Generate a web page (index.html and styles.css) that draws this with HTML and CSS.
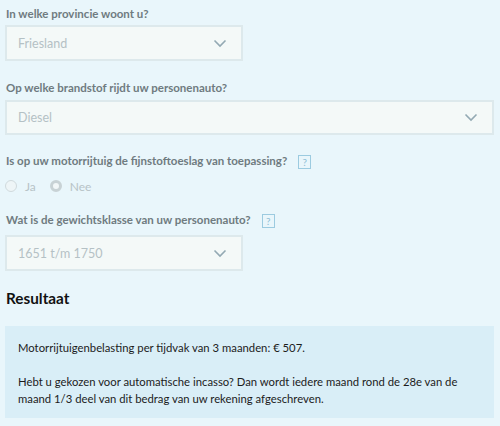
FILE: index.html
```html
<!DOCTYPE html>
<html lang="nl">
<head>
<meta charset="utf-8">
<link rel="stylesheet" href="styles.css">
</head>
<body>
<div class="page">
  <div class="form">
    <div class="field f1">
      <div class="label">In welke provincie woont u?</div>
      <div class="select narrow">
        <span class="value">Friesland</span>
        <svg class="chev" width="14" height="9" viewBox="0 0 14 9"><path d="M1.5 1.5 L7 7 L12.5 1.5" fill="none" stroke="#93a9b3" stroke-width="1.6"/></svg>
      </div>
    </div>
    <div class="field f2">
      <div class="label">Op welke brandstof rijdt uw personenauto?</div>
      <div class="select wide">
        <span class="value">Diesel</span>
        <svg class="chev" width="14" height="9" viewBox="0 0 14 9"><path d="M1.5 1.5 L7 7 L12.5 1.5" fill="none" stroke="#93a9b3" stroke-width="1.6"/></svg>
      </div>
    </div>
    <div class="field f3">
      <div class="label">Is op uw motorrijtuig de fijnstoftoeslag van toepassing? <span class="help">?</span></div>
      <div class="radios">
        <span class="radio"></span><span class="rlabel">Ja</span>
        <span class="radio checked"></span><span class="rlabel">Nee</span>
      </div>
    </div>
    <div class="field f4">
      <div class="label">Wat is de gewichtsklasse van uw personenauto? <span class="help">?</span></div>
      <div class="select narrow">
        <span class="value">1651 t/m 1750</span>
        <svg class="chev" width="14" height="9" viewBox="0 0 14 9"><path d="M1.5 1.5 L7 7 L12.5 1.5" fill="none" stroke="#93a9b3" stroke-width="1.6"/></svg>
      </div>
    </div>
  </div>
  <h2 class="title">Resultaat</h2>
  <div class="result">
    <p>Motorrijtuigenbelasting per tijdvak van 3 maanden: € 507.</p>
    <p>Hebt u gekozen voor automatische incasso? Dan wordt iedere maand rond de 28e van de maand 1/3 deel van dit bedrag van uw rekening afgeschreven.</p>
  </div>
</div>
</body>
</html>
```
FILE: styles.css
```css
html, body {
  margin: 0;
  padding: 0;
  background: #e9f6fb;
}
body {
  font-family: Lato, "Open Sans", sans-serif;
  width: 500px;
  height: 426px;
  overflow: hidden;
}
.page {
  padding: 6px 6px 0 5px;
}
.field {
  display: flex;
  flex-direction: column;
}
.label {
  font-weight: 700;
  font-size: 11.5px;
  line-height: 16px;
  color: #6f7b80;
  padding-left: 1px;
  display: flex;
  align-items: center;
  gap: 11px;
}
.f1 { margin-bottom: 19px; }
.f1 .label { margin-bottom: 3px; }
.f2 { margin-bottom: 17px; }
.f2 .label { margin-bottom: 4px; }
.f3 { margin-bottom: 17px; }
.f3 .label { margin-bottom: 9px; }
.f4 .label { margin-bottom: 7px; }
.select {
  box-sizing: border-box;
  height: 36px;
  background: #f4f9f8;
  border: 2px solid #dde9ec;
  display: flex;
  align-items: center;
  justify-content: space-between;
  padding: 0 14px 0 11px;
  font-size: 12.5px;
  color: #b4c1c5;
}
.narrow { width: 238px; }
.wide { width: 489px; height: 35px; }
.chev { display: block; }
.help {
  box-sizing: border-box;
  width: 13px;
  height: 14px;
  margin-top: 3px;
  border: 1px solid #9ccbe0;
  color: #8fc0d6;
  font-weight: 400;
  font-size: 10px;
  line-height: 12px;
  text-align: center;
  display: inline-block;
}
.radios {
  display: flex;
  align-items: center;
  height: 16px;
  font-size: 12px;
  color: #b7c3c7;
}
.radio {
  box-sizing: border-box;
  width: 12px;
  height: 12px;
  border-radius: 50%;
  border: 1px solid #d0dadd;
  background: #eef5f7;
  margin-right: 8px;
}
.radio.checked {
  background: #f2f7f8;
  border: 3px solid #c8d2d5;
}
.rlabel { margin-right: 14px; }
.title {
  margin: 17px 0 0 1px;
  font-size: 15.3px;
  line-height: 20px;
  font-weight: 700;
  color: #111;
}
.result {
  margin-top: 18px;
  width: 489px;
  box-sizing: border-box;
  background: #d9eef7;
  padding: 13px 13px 11px 13px;
  font-size: 11.3px;
  line-height: 17px;
  color: #1c1c1c;
}
.result p {
  margin: 0 0 17px 0;
}
.result p:last-child { margin-bottom: 0; }
```
